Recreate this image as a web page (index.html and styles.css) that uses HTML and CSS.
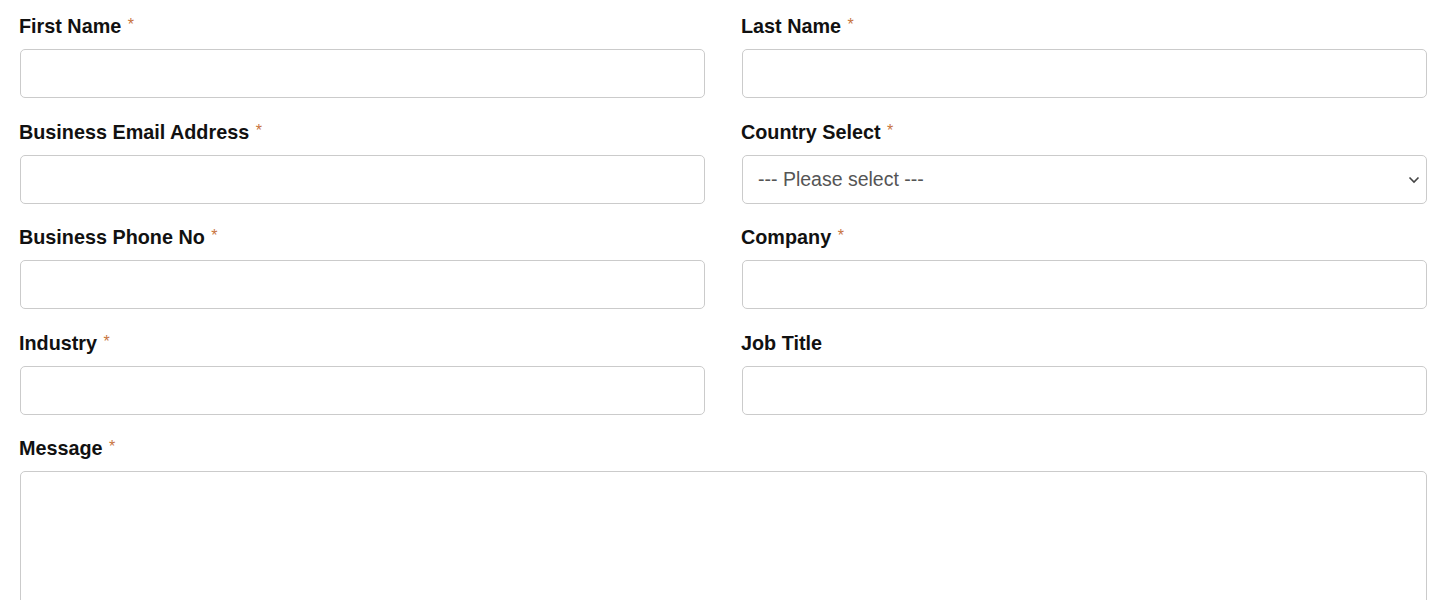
FILE: index.html
```html
<!DOCTYPE html>
<html lang="en">
<head>
  <meta charset="UTF-8">
  <title>Contact Form</title>
  <link rel="stylesheet" href="styles.css">
</head>
<body>
  <form class="contact-form">
    <div class="field">
      <label>First Name <span class="req">*</span></label>
      <input type="text">
    </div>
    <div class="field">
      <label>Last Name <span class="req">*</span></label>
      <input type="text">
    </div>

    <div class="field">
      <label>Business Email Address <span class="req">*</span></label>
      <input type="email">
    </div>
    <div class="field">
      <label>Country Select <span class="req">*</span></label>
      <div class="select-wrap">
        <select>
          <option>--- Please select ---</option>
        </select>
        <svg class="chevron" width="12" height="8" viewBox="0 0 12 8">
          <path d="M1.5 1.5 L6 6 L10.5 1.5" fill="none" stroke="#444" stroke-width="1.6"/>
        </svg>
      </div>
    </div>

    <div class="field">
      <label>Business Phone No <span class="req">*</span></label>
      <input type="tel">
    </div>
    <div class="field">
      <label>Company <span class="req">*</span></label>
      <input type="text">
    </div>

    <div class="field">
      <label>Industry <span class="req">*</span></label>
      <input type="text">
    </div>
    <div class="field">
      <label>Job Title</label>
      <input type="text">
    </div>

    <div class="field full">
      <label>Message <span class="req">*</span></label>
      <textarea rows="6"></textarea>
    </div>
  </form>
</body>
</html>
```

FILE: styles.css
```css
body {
  margin: 0;
  background: #fff;
  font-family: "Liberation Sans", Arial, sans-serif;
  color: #111;
}

.contact-form {
  display: grid;
  grid-template-columns: 1fr 1fr;
  column-gap: 37px;
  row-gap: 21.5px;
  padding: 14px 13px 0 20px;
}

.field label {
  display: block;
  height: 24px;
  font-size: 19.8px;
  font-weight: bold;
  line-height: 24px;
  margin-bottom: 11px;
  margin-left: -1px;
}

.req {
  color: #c8743e;
  font-weight: normal;
  font-size: 16px;
  line-height: 1;
  vertical-align: 3px;
  margin-left: 1px;
}

.field input,
.field select,
.field textarea {
  display: block;
  width: 100%;
  box-sizing: border-box;
  height: 49px;
  border: 1px solid #cbcbcb;
  border-radius: 5px;
  background: #fff;
  font-family: inherit;
  font-size: 19.5px;
  padding: 0 15px;
  margin: 0;
  outline: none;
}

.full {
  grid-column: 1 / span 2;
}

.field textarea {
  height: 200px;
  resize: none;
}

.select-wrap {
  position: relative;
}

.field select {
  appearance: none;
  -webkit-appearance: none;
  color: #555;
}

.chevron {
  position: absolute;
  right: 7px;
  top: 21px;
  pointer-events: none;
}
```
